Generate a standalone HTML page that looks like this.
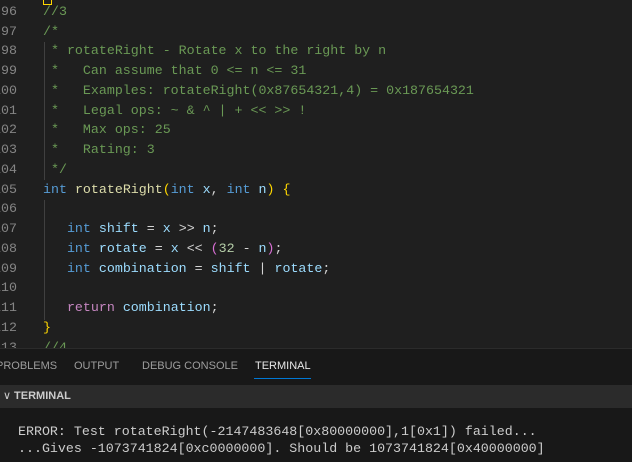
<!DOCTYPE html>
<html><head><style>
body{margin:0;width:632px;height:461px;overflow:hidden;background:#1f1f1f;font-family:"Liberation Mono",monospace;font-size:13.3px;position:relative}
.ln{position:absolute;left:-20px;width:37px;text-align:right;color:#858585;height:20px;line-height:20px;white-space:pre}
.c{position:absolute;left:43px;height:20px;line-height:20px;white-space:pre;color:#d4d4d4}
.cm{color:#6a9955}.k{color:#569cd6}.f{color:#dcdcaa}.v{color:#9cdcfe}.n{color:#b5cea8}.y{color:#ffd700}.p{color:#da70d6}.r{color:#c586c0}
.guide{position:absolute;left:44px;width:1px;background:#404040}
#panel{position:absolute;left:0;top:348px;width:632px;height:113px;background:#181818;border-top:1px solid #2b2b2b}
.tab{position:absolute;top:11px;font-family:"Liberation Sans",sans-serif;font-size:11px;color:#9d9d9d}
</style></head><body>
<div class="guide" style="top:42px;height:138px"></div>
<div class="guide" style="top:200px;height:120px"></div>
<div style="position:absolute;left:43px;top:-4px;width:7px;height:7px;border:1px solid #ffd700"></div>
<div class="ln" style="top:2px">96</div><div class="c cm" style="top:2px">//3</div>
<div class="ln" style="top:22px">97</div><div class="c cm" style="top:22px">/*</div>
<div class="ln" style="top:41px">98</div><div class="c cm" style="top:41px"> * rotateRight - Rotate x to the right by n</div>
<div class="ln" style="top:61px">99</div><div class="c cm" style="top:61px"> *   Can assume that 0 &lt;= n &lt;= 31</div>
<div class="ln" style="top:81px">100</div><div class="c cm" style="top:81px"> *   Examples: rotateRight(0x87654321,4) = 0x187654321</div>
<div class="ln" style="top:101px">101</div><div class="c cm" style="top:101px"> *   Legal ops: ~ &amp; ^ | + &lt;&lt; &gt;&gt; !</div>
<div class="ln" style="top:120px">102</div><div class="c cm" style="top:120px"> *   Max ops: 25</div>
<div class="ln" style="top:140px">103</div><div class="c cm" style="top:140px"> *   Rating: 3</div>
<div class="ln" style="top:160px">104</div><div class="c cm" style="top:160px"> */</div>
<div class="ln" style="top:180px">105</div><div class="c" style="top:180px"><span class="k">int</span> <span class="f">rotateRight</span><span class="y">(</span><span class="k">int</span> <span class="v">x</span>, <span class="k">int</span> <span class="v">n</span><span class="y">)</span> <span class="y">{</span></div>
<div class="ln" style="top:199px">106</div>
<div class="ln" style="top:219px">107</div><div class="c" style="top:219px">   <span class="k">int</span> <span class="v">shift</span> = <span class="v">x</span> &gt;&gt; <span class="v">n</span>;</div>
<div class="ln" style="top:239px">108</div><div class="c" style="top:239px">   <span class="k">int</span> <span class="v">rotate</span> = <span class="v">x</span> &lt;&lt; <span class="p">(</span><span class="n">32</span> - <span class="v">n</span><span class="p">)</span>;</div>
<div class="ln" style="top:259px">109</div><div class="c" style="top:259px">   <span class="k">int</span> <span class="v">combination</span> = <span class="v">shift</span> | <span class="v">rotate</span>;</div>
<div class="ln" style="top:278px">110</div>
<div class="ln" style="top:298px">111</div><div class="c" style="top:298px">   <span class="r">return</span> <span class="v">combination</span>;</div>
<div class="ln" style="top:318px">112</div><div class="c" style="top:318px"><span class="y">}</span></div>
<div class="ln" style="top:338px">113</div><div class="c cm" style="top:338px">//4</div>
<div id="panel">
<div class="tab" style="left:-4px">PROBLEMS</div>
<div class="tab" style="left:74px">OUTPUT</div>
<div class="tab" style="left:142px">DEBUG CONSOLE</div>
<div class="tab" style="left:255px;color:#e7e7e7">TERMINAL</div>
<div style="position:absolute;left:254px;top:29px;width:57px;height:1px;background:#0078d4"></div>
<div style="position:absolute;left:0;top:36px;width:632px;height:23px;background:#2b2b2b;font-family:'Liberation Sans',sans-serif;font-size:11px;font-weight:bold;color:#cccccc;line-height:23px"><span style="display:inline-block;margin-left:3px;width:8px;font-weight:normal">&#8744;</span> TERMINAL</div>
<div style="position:absolute;left:18px;top:74px;color:#cccccc;white-space:pre;line-height:17px">ERROR: Test rotateRight(-2147483648[0x80000000],1[0x1]) failed...
...Gives -1073741824[0xc0000000]. Should be 1073741824[0x40000000]</div>
</div>
</body></html>
